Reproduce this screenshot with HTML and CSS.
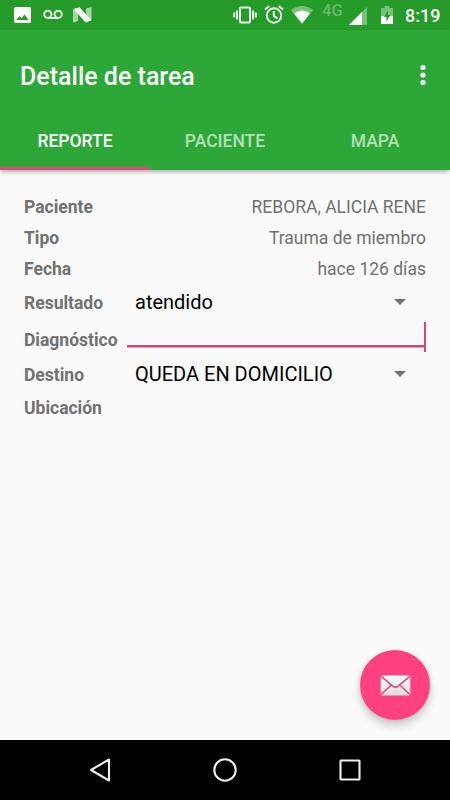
FILE: index.html
```html
<!DOCTYPE html>
<html lang="es">
<head>
<meta charset="utf-8">
<title>Detalle de tarea</title>
<link rel="stylesheet" href="styles.css">
</head>
<body>
<div class="status">
  <svg class="i-image" width="17" height="17" viewBox="0 0 17 17"><path fill="#fff" fill-rule="evenodd" d="M1.500 0h14a1.500 1.500 0 0 1 1.500 1.500v13a1.500 1.500 0 0 1-1.500 1.500h-14A1.500 1.500 0 0 1 0 14.500v-13A1.500 1.500 0 0 1 1.500 0zM2.500 13h12l-4-5.500-3 3.800-2-2.400z"/></svg>
  <svg class="i-voice" width="20" height="11" viewBox="0 0 20 11" fill="none" stroke="#e9f5e9" stroke-width="1.900"><circle cx="4.800" cy="5.300" r="3.600"/><circle cx="15.200" cy="5.300" r="3.600"/><path d="M4.800 9h10.400"/></svg>
  <svg class="i-n" width="19" height="16" viewBox="0 0 19 16"><path fill="#a4d6a5" d="M0 2.500L5 1v13l-5 1.500zM13 1.500L18.500 0v13.500L13 15z"/><path fill="#fff" d="M.5 2L6.500 .3 18.200 13.300l-5.500 2.200z"/></svg>
  <span class="grow"></span>
  <svg class="i-vibrate" width="24" height="18" viewBox="0 0 24 18" fill="none" stroke="#e9f5e9" stroke-width="2"><rect x="7" y="1.500" width="10" height="15" rx="1"/><path d="M4 4.500v9M1.200 6.500v5M20 4.500v9M22.800 6.500v5"/></svg>
  <svg class="i-alarm" width="20" height="19" viewBox="0 0 20 19" fill="none" stroke="#e9f5e9" stroke-width="2"><circle cx="10" cy="10.500" r="7.200"/><path d="M1 4.500l4.200-3.600M19 4.500L14.800.9M9.800 6v5l3.700 2.300"/></svg>
  <svg class="i-wifi" width="22" height="18" viewBox="0 0 22 18"><path fill="#77c178" d="M0 4.200Q11-4 22 4.200L11 18z"/><path fill="#fff" d="M3 7.200Q11 1.600 19 7.200L11 17.500z"/></svg>
  <span class="net">4G</span>
  <svg class="i-signal" width="18" height="18" viewBox="0 0 18 18"><path fill="#77c178" d="M18 0v18H0z"/><path fill="#fff" d="M13 5v13H0z"/></svg>
  <svg class="i-battery" width="12" height="18" viewBox="0 0 12 18"><path fill="#77c178" d="M0 2h3.500V0h5v2H12v9H0z"/><path fill="#fff" d="M0 10h12v8H0z"/><path fill="#229a2c" d="M7 4.500L3 11h2.500v4.500L9.300 9H7z"/></svg>
  <span class="clock">8:19</span>
</div>
<header class="appbar">
  <div class="toolbar">
    <h1>Detalle de tarea</h1>
    <svg width="6" height="22" viewBox="0 0 6 22" fill="#fff"><circle cx="3" cy="3.500" r="2.600"/><circle cx="3" cy="11" r="2.600"/><circle cx="3" cy="18.500" r="2.600"/></svg>
  </div>
  <nav class="tabs">
    <a class="tab active">REPORTE</a>
    <a class="tab">PACIENTE</a>
    <a class="tab">MAPA</a>
  </nav>
</header>
<main class="form">
  <div class="row"><b>Paciente</b><span class="value">REBORA, ALICIA RENE</span></div>
  <div class="row"><b>Tipo</b><span class="value">Trauma de miembro</span></div>
  <div class="row"><b>Fecha</b><span class="value">hace 126 días</span></div>
  <div class="row result"><b>Resultado</b><span class="select">atendido<i class="caret"></i></span></div>
  <div class="row diag"><b>Diagnóstico</b><span class="input"><i class="cursor"></i></span></div>
  <div class="row dest"><b>Destino</b><span class="select">QUEDA EN DOMICILIO<i class="caret"></i></span></div>
  <div class="row"><b>Ubicación</b></div>
</main>
<div class="fab">
  <svg width="31" height="21" viewBox="0 0 32 22"><defs><linearGradient id="g" x1="0" y1="0" x2="0" y2="1"><stop offset="0" stop-color="#fff"/><stop offset="1" stop-color="#ddd"/></linearGradient></defs><rect x=".5" y=".5" width="31" height="21" rx="1.500" fill="url(#g)"/><path d="M1 1.500L13.500 12q2.500 2 5 0L31 1.500M1 20.500l10.500-10M31 20.500l-10.500-10" fill="none" stroke="#d5497b" stroke-width="1.600"/></svg>
</div>
<footer class="navbar">
  <svg width="24" height="26" viewBox="0 0 24 26"><path d="M21 2.500v21L3 13z"/></svg>
  <svg width="26" height="26" viewBox="0 0 26 26"><circle cx="13" cy="13" r="10.700"/></svg>
  <svg width="24" height="26" viewBox="0 0 24 26"><rect x="2.500" y="3.500" width="19" height="19" rx=".5"/></svg>
</footer>
</body>
</html>
```
FILE: styles.css
```css
* { box-sizing: border-box; }
body {
  margin: 0;
  width: 450px;
  height: 800px;
  display: flex;
  flex-direction: column;
  position: relative;
  overflow: hidden;
  background: #fafafa;
  font-family: Roboto, sans-serif;
}
svg { display: block; flex: none; }
.status {
  height: 30px;
  flex: none;
  display: flex;
  align-items: flex-start;
  padding: 0 10px 0 14px;
  background: #259b29;
  color: #fff;
}
.grow { flex: 1; }
.i-image { margin-top: 7px; }
.i-voice { margin: 9px 0 0 12px; }
.i-n { margin: 7px 0 0 10px; }
.i-vibrate { margin: 6px 7px 0 0; }
.i-alarm { margin: 5px 7px 0 0; }
.i-wifi { margin: 6px 8px 0 0; }
.net { width: 28px; font-size: 16.5px; line-height: 16px; margin-top: 3px; padding-left: 1px; font-weight: 500; color: #68b96a; }
.i-signal { margin: 7px 14px 0 0; }
.i-battery { margin: 6px 12px 0 0; }
.clock { width: 35px; font-size: 18px; line-height: 20px; margin-top: 6px; font-weight: 500; white-space: nowrap; }
.appbar {
  height: 140px;
  flex: none;
  background: #2da737;
  color: #fff;
  box-shadow: 0 3px 4px -1px rgba(0, 0, 0, .3);
}
.toolbar {
  height: 82px;
  padding: 10px 24px 0 20px;
  display: flex;
  align-items: flex-start;
  justify-content: space-between;
}
h1 { margin: 22px 0 0; font-size: 25px; line-height: 30px; font-weight: 500; }
.toolbar svg { margin-top: 24px; }
.tabs { display: flex; height: 58px; }
.tab {
  flex: 1;
  text-align: center;
  font-size: 17.5px;
  line-height: 58px;
  font-weight: 500;
  color: #b4e0b7;
}
.active { color: #fff; border-bottom: 3px solid #e0457a; }
.form { flex: 1; padding: 21px 24px 0; color: #717171; font-size: 17.5px; }
.row { height: 31.300px; display: flex; align-items: center; justify-content: space-between; }
.row b { font-weight: 700; }
.result { height: 37px; }
.diag { height: 37px; }
.dest { height: 33px; }
.select {
  width: 291px;
  margin-top: -3px;
  padding-right: 20px;
  display: flex;
  justify-content: space-between;
  align-items: center;
  font-size: 20px;
  color: #000;
}
.caret { border: 6px solid transparent; border-top-color: #757575; border-bottom: 0; }
.input {
  width: 299px;
  height: 31px;
  margin-top: -6px;
  display: flex;
  justify-content: flex-end;
  background: linear-gradient(#d9447a, #d9447a) 0 23.500px / 100% 2.500px no-repeat;
}
.cursor { width: 2px; height: 30px; background: #d9447a; }
.fab {
  position: absolute;
  left: 360px;
  top: 650px;
  width: 70px;
  height: 70px;
  border-radius: 50%;
  background: #ff4081;
  display: flex;
  align-items: center;
  justify-content: center;
  box-shadow: 0 6px 10px rgba(0, 0, 0, .18), 0 1px 5px rgba(0, 0, 0, .1);
}
.navbar {
  height: 60px;
  flex: none;
  background: #000;
  display: flex;
  align-items: center;
  justify-content: space-between;
  padding: 0 88px;
  fill: none;
  stroke: #eee;
  stroke-width: 2.100;
  stroke-linejoin: round;
}
```
